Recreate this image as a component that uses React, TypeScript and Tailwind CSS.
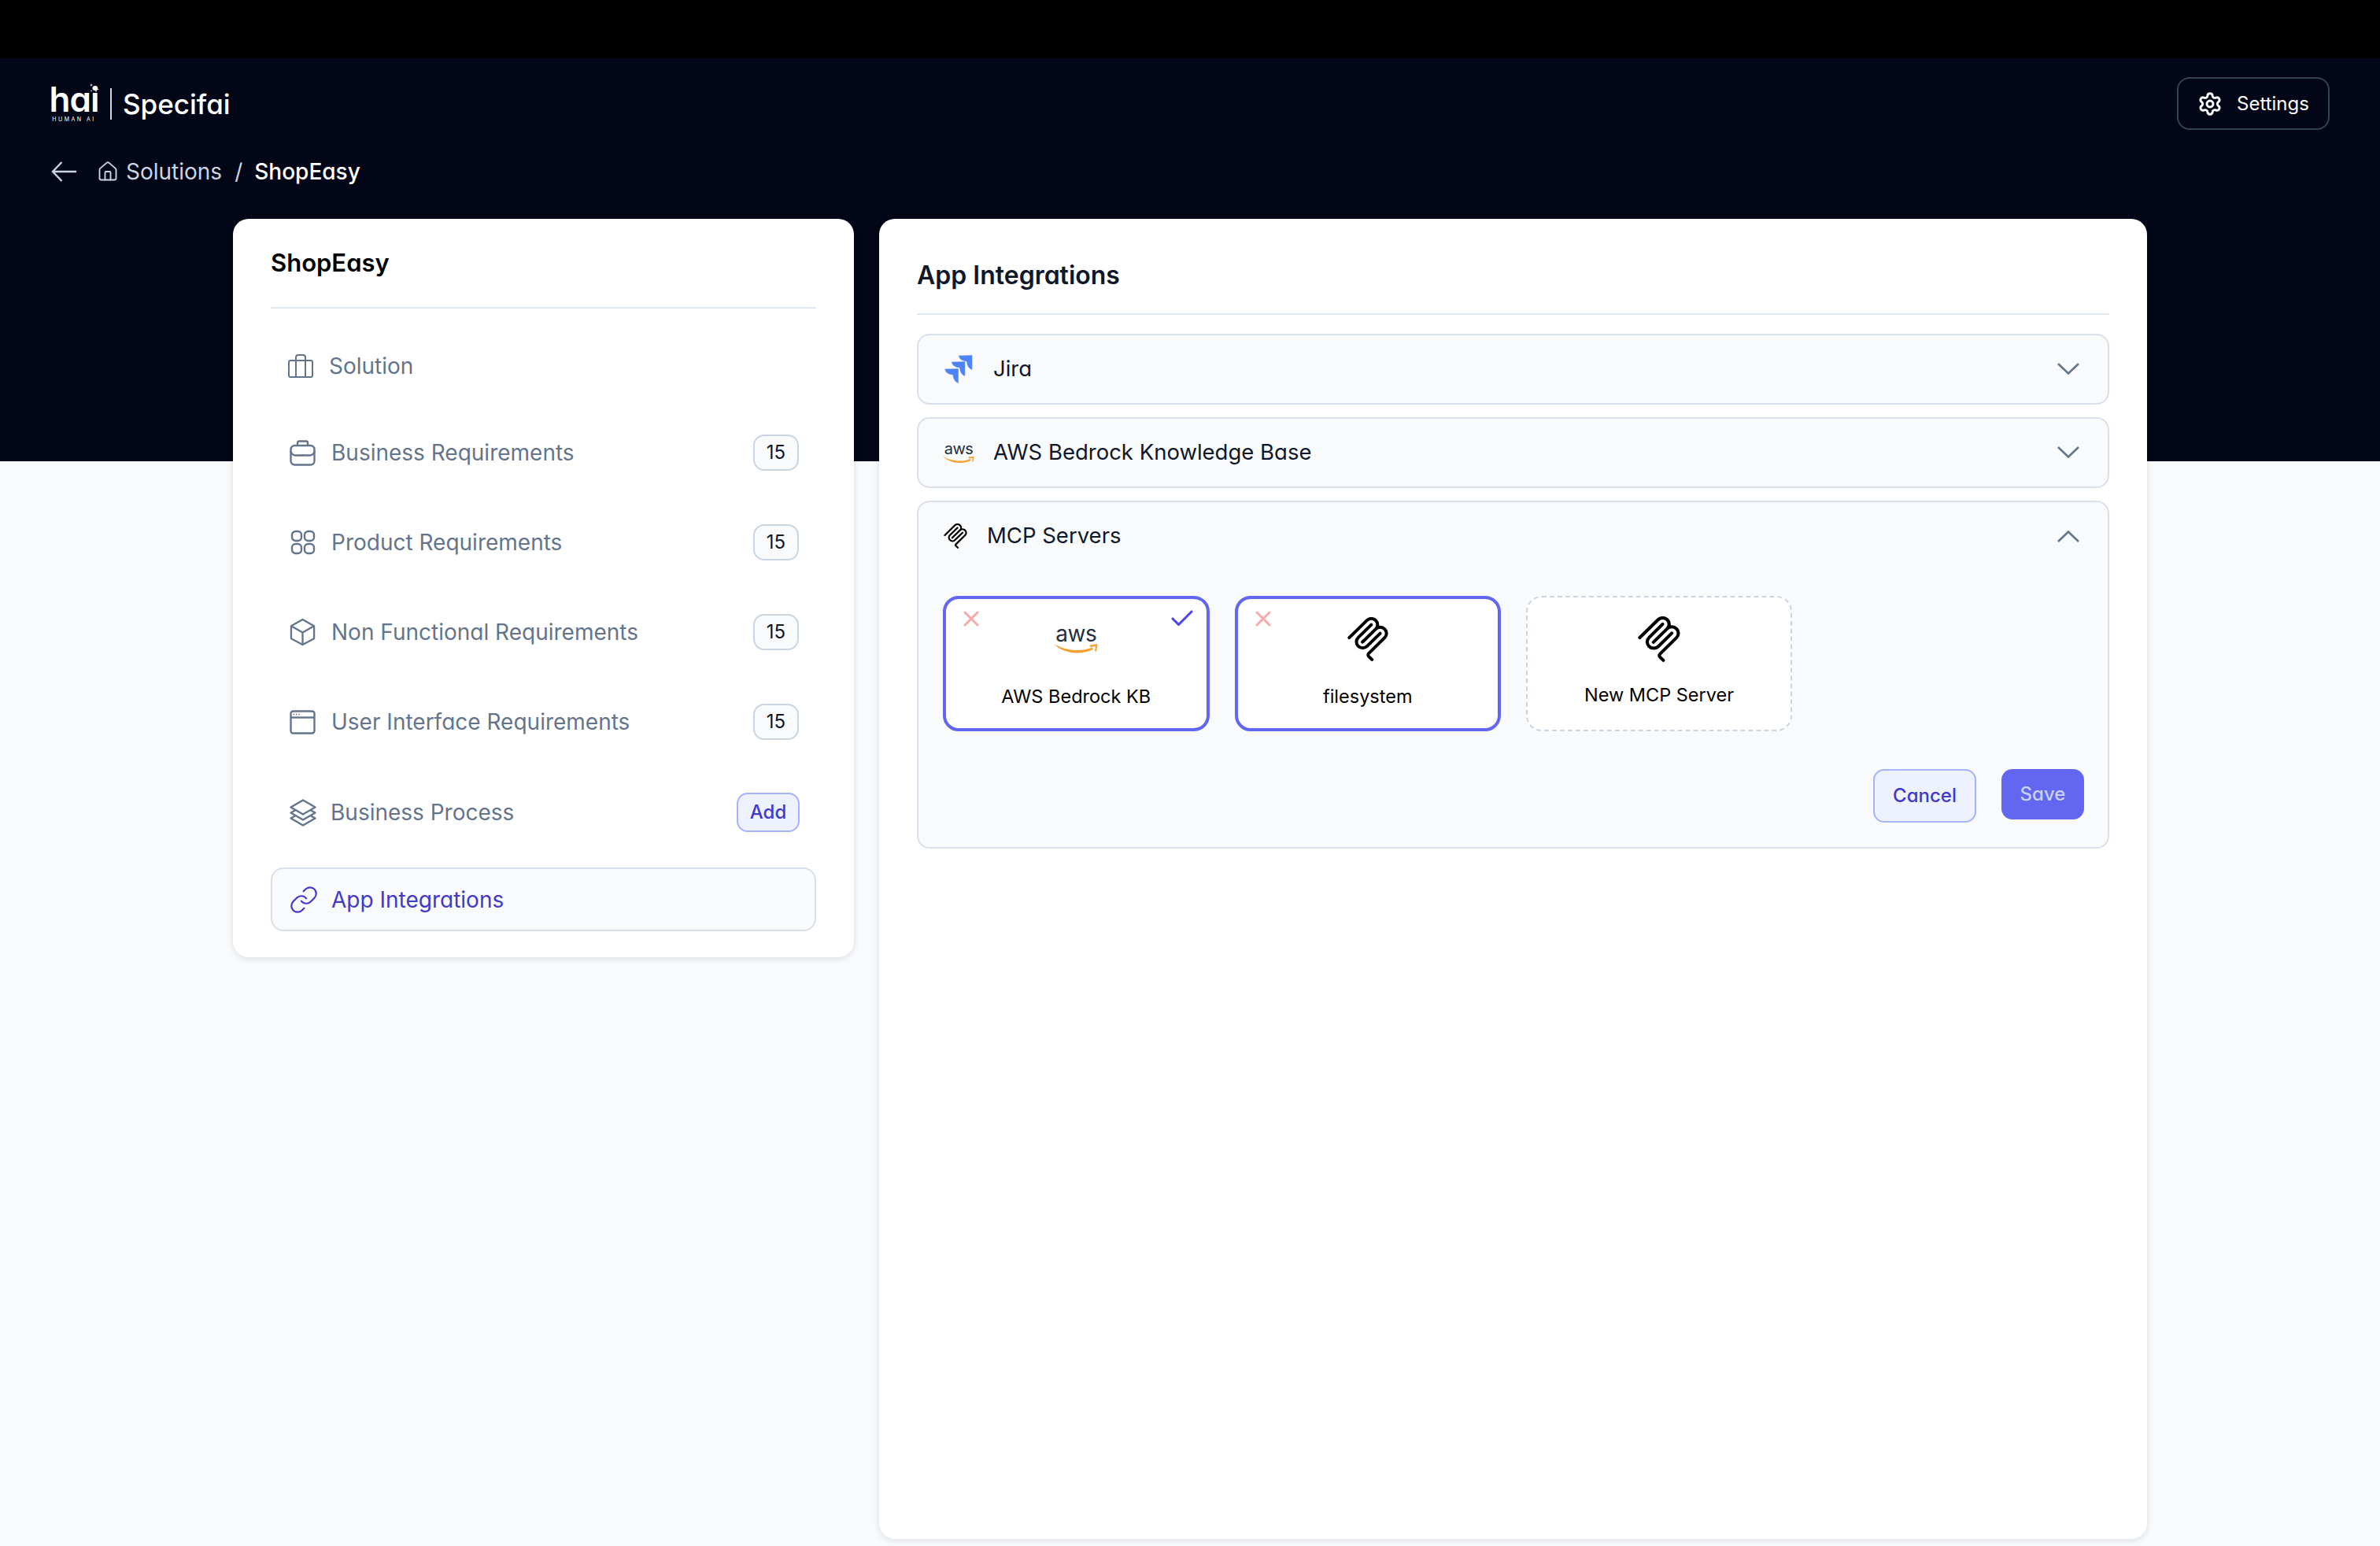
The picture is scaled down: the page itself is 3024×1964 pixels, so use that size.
import { Check, House, Link, Settings, X } from "lucide-react";

const navStroke = "#64748b";

const SolutionIcon = () => (
  <svg width="32" height="30" viewBox="0 0 32 30" fill="none" stroke={navStroke} strokeWidth="2">
    <rect x="1" y="8" width="30" height="21" rx="2" />
    <path d="M10 8V4a3 3 0 0 1 3-3h6a3 3 0 0 1 3 3v4M10 8v21M22 8v21" />
  </svg>
);

const BackpackIcon = () => (
  <svg width="33" height="33" viewBox="0 0 33 33" fill="none" stroke={navStroke} strokeWidth="2.4">
    <rect x="1.5" y="7" width="30" height="24.5" rx="5" />
    <path d="M10 7V3.5a2 2 0 0 1 2-2h9a2 2 0 0 1 2 2V7M1.5 14c0 3 3 5.5 6 5.5h18c3 0 6-2.500 6-5.500M16.500 18v2" />
  </svg>
);

const GridIcon = () => (
  <svg width="32" height="32" viewBox="0 0 32 32" fill="none" stroke={navStroke} strokeWidth="2.4">
    <rect x="2" y="2" width="12" height="12" rx="4.500" />
    <rect x="18" y="2" width="12" height="12" rx="4.500" />
    <rect x="2" y="18" width="12" height="12" rx="4.500" />
    <rect x="18" y="18" width="12" height="12" rx="4.500" />
  </svg>
);

const CubeIcon = () => (
  <svg width="34" height="36" viewBox="0 0 34 36" fill="none" stroke={navStroke} strokeWidth="2.4" strokeLinejoin="round">
    <path d="M17 1.500 32 10v16.500L17 34.500 2 26.500V10Z" />
    <path d="M2 10l15 8.500L32 10M17 18.500v16" />
  </svg>
);

const WindowIcon = () => (
  <svg width="33" height="31" viewBox="0 0 33 31" fill="none" stroke={navStroke} strokeWidth="2.4">
    <rect x="1.500" y="1.500" width="30" height="28" rx="3" />
    <path d="M1.500 9.500h30" />
    <path d="M4.500 5.500h1.500M8 5.500h1.500M11.500 5.500H13" strokeWidth="1.600" />
  </svg>
);

const LayersIcon = () => (
  <svg width="36" height="35" viewBox="0 0 36 35" fill="none" stroke={navStroke} strokeWidth="2.400" strokeLinejoin="round">
    <path d="M18 1.500 33.500 10.500 18 19.500 2.500 10.500Z" />
    <path d="M8 14.500 2.500 17.500 18 26.500l15.500-9-5.500-3" />
    <path d="M8 21.500 2.500 24.500 18 33.500l15.500-9-5.500-3" />
  </svg>
);

const McpIcon = ({ className }: { className: string }) => (
  <svg className={className} viewBox="0 0 24 24" fill="currentColor">
    <path d="M15.688 2.343a2.588 2.588 0 00-3.61 0l-9.626 9.44a.863.863 0 01-1.203 0 .823.823 0 010-1.18l9.626-9.44a4.313 4.313 0 016.016 0 4.116 4.116 0 011.204 3.54 4.3 4.3 0 013.609 1.18l.05.05a4.115 4.115 0 010 5.9l-8.706 8.537a.274.274 0 000 .393l1.788 1.754a.823.823 0 010 1.18.863.863 0 01-1.203 0l-1.788-1.753a1.92 1.92 0 010-2.754l8.706-8.538a2.47 2.47 0 000-3.54l-.05-.049a2.588 2.588 0 00-3.607-.003l-7.172 7.034-.002.002-.098.097a.863.863 0 01-1.204 0 .823.823 0 010-1.18l7.273-7.133a2.47 2.47 0 00-.003-3.537z" />
    <path d="M14.485 4.703a.823.823 0 000-1.18.863.863 0 00-1.204 0l-7.119 6.982a4.115 4.115 0 000 5.9 4.314 4.314 0 006.016 0l7.12-6.982a.823.823 0 000-1.18.863.863 0 00-1.204 0l-7.119 6.982a2.588 2.588 0 01-3.61 0 2.47 2.47 0 010-3.54l7.12-6.982z" />
  </svg>
);

const JiraIcon = () => {
  const piece = "M0 0.500 Q9 0 18 0 V19 Q11 17 10.500 8.500 Q2 8 0 0.500Z";
  return (
    <svg width="36" height="36" viewBox="0 0 36 36" fill="#4b85f8" stroke="#f8fafc" strokeWidth="0.500">
      <path d={piece} transform="translate(17.500 0)" />
      <path d={piece} transform="translate(8.500 8)" />
      <path d={piece} transform="translate(0 17)" />
    </svg>
  );
};

const AwsSmile = ({ className }: { className: string }) => (
  <svg className={className} viewBox="0 0 56 14" fill="#f79f2d">
    <path d="M0.500 1C13 9 33 12 49 5.500L50 8C34 16 11 13 0.500 1Z" />
    <path d="M45.500 2.500 55.500 1 54 10.500 52 10 53 4 46 5Z" />
  </svg>
);

const NavRow = ({ icon, label, badge }: { icon: React.ReactNode; label: string; badge?: string }) => (
  <div className="h-[114px] flex items-center justify-between pl-[24px] pr-[22px]">
    <div className="flex items-center gap-[20px]">
      <span className="w-[33px] flex justify-center">{icon}</span>
      <span className="text-[28px] text-[#64748b]">{label}</span>
    </div>
    {badge && (
      <span className="w-[58px] h-[46px] flex items-center justify-center rounded-[14px] border-2 border-[#cbd5e1] bg-[#f8fafc] text-[24px] text-[#0f172a]">
        {badge}
      </span>
    )}
  </div>
);

const AccordionHead = ({ icon, label, up }: { icon: React.ReactNode; label: string; up?: boolean }) => (
  <div className="h-[86px] flex items-center justify-between pl-[31px] pr-[36px]">
    <div className="flex items-center gap-[24px]">
      {icon}
      <span className="text-[27.5px] text-[#0f172a]">{label}</span>
    </div>
    <svg width="28" height="16" viewBox="0 0 28 16" fill="none" stroke="#64748b" strokeWidth="2.600">
      <path d={up ? "M1 15 14 2.500 27 15" : "M1 1 14 13.500 27 1"} />
    </svg>
  </div>
);

const Tile = ({ icon, label, checked }: { icon: React.ReactNode; label: string; checked?: boolean }) => (
  <div className="relative w-[338.5px] h-[172px] rounded-[20px] border-4 border-[#6366f1] bg-white flex flex-col items-center pt-[23px]">
    <X className="absolute left-[16px] top-[9px] text-[#f5a9a9]" size={32} strokeWidth={2.2} />
    {checked && <Check className="absolute right-[13px] top-[7px] text-[#4f46e5]" size={36} strokeWidth={2.1} />}
    <div className="h-[56px] flex flex-col items-center justify-center">{icon}</div>
    <span className="mt-[29px] text-[23.5px] leading-[32px] text-black">{label}</span>
  </div>
);

export default function App() {
  return (
    <div className="h-[1964px] overflow-hidden bg-[#f8fafc] font-[Inter,sans-serif] [font-feature-settings:'cv11']">
      <div className="h-[74px] bg-black" />
      <header className="h-[512px] bg-[#020617] px-[64px] pt-[24px]">
        <div className="flex items-center justify-between">
          <div className="flex items-center text-white">
            <div className="relative -ml-[1px] w-[62px] h-[50px] flex flex-col items-center">
              <span className="text-[44px] leading-[38px] font-semibold tracking-[-1px]">hai</span>
              <span className="mt-[2px] text-[7px] leading-[10px] tracking-[2.500px] whitespace-nowrap">HUMAN AI</span>
              <svg className="absolute -right-[2px] -top-[1px]" width="14" height="13" viewBox="0 0 14 13" fill="white">
                <path d="M9 3.500 10 6.500 13 7.500 10 8.500 9 11.500 8 8.500 5 7.500 8 6.500Z" />
                <path d="M3 0 3.500 1.500 5 2 3.500 2.500 3 4 2.500 2.500 1 2 2.500 1.500Z" />
                <circle cx="3" cy="9.500" r="0.800" />
              </svg>
            </div>
            <div className="ml-[15px] mr-[14px] w-[2px] h-[40px] bg-[#cbd5e1]" />
            <span className="text-[35px] leading-[40px] font-medium">Specifai</span>
          </div>
          <button className="w-[194px] h-[67px] flex items-center justify-center gap-[18px] rounded-[16px] border-2 border-[#334155] text-[24px] text-white">
            <Settings size={32} strokeWidth={2.2} />
            Settings
          </button>
        </div>
        <div className="mt-[33px] h-[40px] flex items-center text-[28px] text-[#cbd5e1]">
          <svg className="ml-[1px]" width="32" height="28" viewBox="0 0 32 28" fill="none" stroke="#cbd5e1" strokeWidth="2.400">
            <path d="M13.500 2 2 14l11.500 12M2 14h30" />
          </svg>
          <House className="ml-[26px] text-[#cbd5e1]" size={28} strokeWidth={1.6} />
          <span className="ml-[9px]">Solutions</span>
          <span className="ml-[16px]">/</span>
          <span className="ml-[15px] font-medium text-white">ShopEasy</span>
        </div>
      </header>

      <main className="relative -mt-[308px] px-[296px] flex items-start gap-[32px]">
        <aside className="w-[789px] h-[938px] shrink-0 rounded-[20px] bg-white px-[48px] shadow-[0_2px_8px_rgba(15,23,42,0.12)]">
          <div className="h-[114px] flex items-center border-b-2 border-[#e2e8f0] text-[31px] font-semibold text-black">ShopEasy</div>
          <div className="mt-[32px] h-[82px] flex items-center gap-[20px] pl-[22px]">
            <SolutionIcon />
            <span className="text-[28px] text-[#64748b]">Solution</span>
          </div>
          <div className="mt-[12px]">
            <NavRow icon={<BackpackIcon />} label="Business Requirements" badge="15" />
            <NavRow icon={<GridIcon />} label="Product Requirements" badge="15" />
            <NavRow icon={<CubeIcon />} label="Non Functional Requirements" badge="15" />
            <NavRow icon={<WindowIcon />} label="User Interface Requirements" badge="15" />
          </div>
          <div className="h-[116px] flex items-center justify-between pl-[23px] pr-[21px]">
            <div className="flex items-center gap-[17px]">
              <LayersIcon />
              <span className="text-[28px] text-[#64748b]">Business Process</span>
            </div>
            <button className="w-[80px] h-[50px] rounded-[14px] border-2 border-[#a5b4fc] bg-[#eef2ff] text-[24px] font-medium text-[#4338ca]">Add</button>
          </div>
          <div className="mt-[12px] h-[81px] flex items-center gap-[16px] pl-[21px] rounded-[16px] border-2 border-[#d9e0ea] bg-[#f8fafc]">
            <Link className="text-[#4338ca]" size={38} strokeWidth={1.4} />
            <span className="text-[28px] text-[#4338ca]">App Integrations</span>
          </div>
        </aside>

        <section className="w-[1611px] h-[1677px] rounded-[20px] bg-white px-[48px] shadow-[0_2px_8px_rgba(15,23,42,0.12)]">
          <div className="pt-[52px] pb-[28px] border-b-2 border-[#e2e8f0] text-[32px] leading-[40px] font-semibold text-[#0f172a]">App Integrations</div>
          <div className="mt-[24px] flex flex-col gap-[16px]">
            <div className="rounded-[16px] border-2 border-[#d9e0ea] bg-[#f8fafc]">
              <AccordionHead label="Jira" icon={<span className="w-[40px] flex justify-center"><JiraIcon /></span>} />
            </div>
            <div className="rounded-[16px] border-2 border-[#d9e0ea] bg-[#f8fafc]">
              <AccordionHead
                label="AWS Bedrock Knowledge Base"
                icon={
                  <span className="w-[40px] flex flex-col items-center">
                    <span className="text-[20px] leading-[16px] tracking-[-0.5px] text-[#232f3e] [font-feature-settings:normal]">aws</span>
                    <AwsSmile className="w-[40px] h-[10px] mt-[1px]" />
                  </span>
                }
              />
            </div>
            <div className="h-[442px] rounded-[16px] border-2 border-[#d9e0ea] bg-[#f8fafc]">
              <AccordionHead up label="MCP Servers" icon={<McpIcon className="w-[32px] h-[32px] text-black" />} />
              <div className="mt-[33px] pl-[31px] flex gap-[32px]">
                <Tile
                  checked
                  label="AWS Bedrock KB"
                  icon={
                    <>
                      <span className="text-[28px] leading-[24px] tracking-[-0.5px] text-[#232f3e] [font-feature-settings:normal]">aws</span>
                      <AwsSmile className="w-[56px] h-[14px]" />
                    </>
                  }
                />
                <Tile label="filesystem" icon={<McpIcon className="w-[58px] h-[58px] text-black" />} />
                <div className="w-[338px] h-[172px] rounded-[20px] border-2 border-dashed border-[#cbd5e1] bg-white flex flex-col items-center pt-[24px]">
                  <McpIcon className="w-[58px] h-[58px] text-black" />
                  <span className="mt-[26px] text-[23.5px] leading-[32px] text-black">New MCP Server</span>
                </div>
              </div>
              <div className="mt-[48px] pr-[30px] flex items-start justify-end gap-[32px]">
                <button className="w-[131px] h-[68px] rounded-[14px] border-2 border-[#a5b4fc] bg-[#eef2ff] text-[24px] font-medium text-[#4338ca]">Cancel</button>
                <button className="w-[105px] h-[64px] rounded-[14px] bg-[#6366f1] text-[24px] font-medium text-[#c7d2fe]">Save</button>
              </div>
            </div>
          </div>
        </section>
      </main>
    </div>
  );
}
